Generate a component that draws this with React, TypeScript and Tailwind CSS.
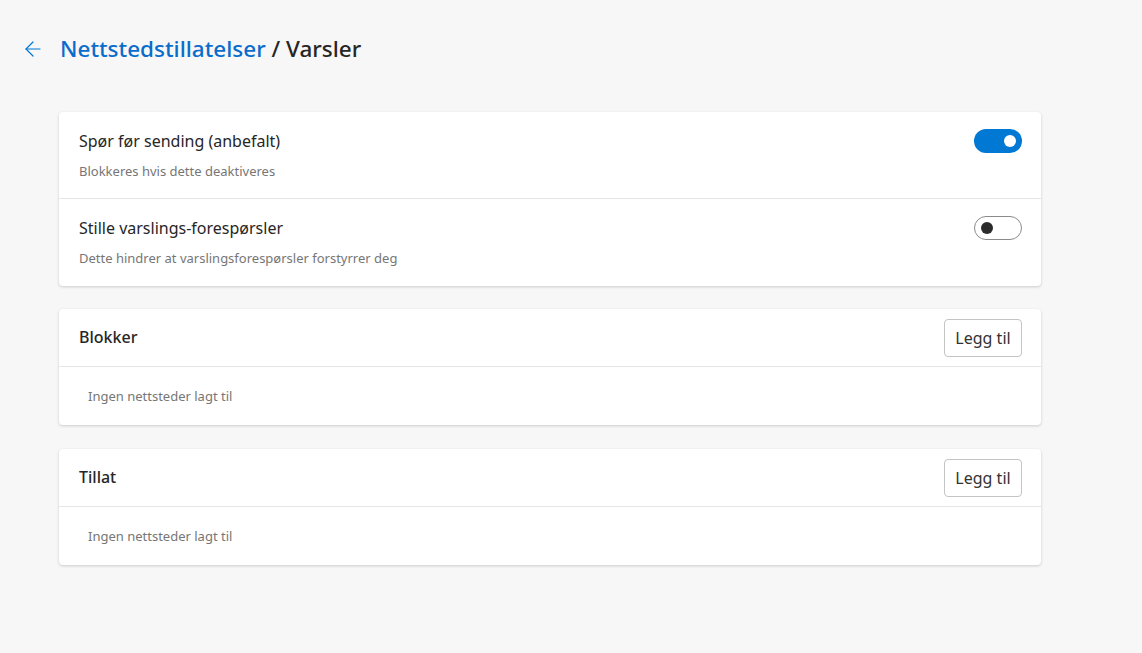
import { ArrowLeft } from "lucide-react";

function Toggle({ on }: { on: boolean }) {
  return on ? (
    <div className="flex h-6 w-12 items-center justify-end rounded-full bg-[#0078d4] pr-[6px]">
      <div className="h-3 w-3 rounded-full bg-white" />
    </div>
  ) : (
    <div className="flex h-6 w-12 items-center rounded-full border border-[#8a8a8a] bg-white pl-[6px]">
      <div className="h-3 w-3 rounded-full bg-[#2b2b2b]" />
    </div>
  );
}

function SettingRow({ title, desc, on, divider }: { title: string; desc: string; on: boolean; divider?: boolean }) {
  return (
    <div
      className={`flex items-start justify-between pl-5 pr-[19px] ${divider ? "h-[88px] border-t border-[#e5e5e5] pt-[17px]" : "h-[86px] pt-[17px]"}`}
    >
      <div className="flex flex-col">
        <p className="text-[16px] leading-6 text-[#262626]">{title}</p>
        <p className="mt-[10px] text-[13px] leading-4 text-[#767676]">{desc}</p>
      </div>
      <Toggle on={on} />
    </div>
  );
}

function SiteList({ title, className = "" }: { title: string; className?: string }) {
  return (
    <div className={`rounded bg-white shadow-[0_1px_3px_rgba(0,0,0,0.18)] ${className}`}>
      <div className="flex h-[58px] items-center justify-between border-b border-[#e5e5e5] pl-5 pr-[19px]">
        <p className="text-[16px] font-medium text-[#262626]">{title}</p>
        <button className="mt-[1px] h-[38px] w-[78px] rounded-sm border border-[#c4c4c4] bg-white text-[16px] text-[#333]">
          Legg til
        </button>
      </div>
      <div className="flex h-[58px] items-center px-[29px] pt-[2px]">
        <p className="text-[13px] text-[#767676]">Ingen nettsteder lagt til</p>
      </div>
    </div>
  );
}

export default function App() {
  return (
    <div className="min-h-[653px] bg-[#f7f7f7] font-['Noto_Sans',sans-serif]">
      <div className="flex items-center gap-[15px] pl-[21px] pt-[32px]">
        <ArrowLeft className="h-6 w-6 text-[#0078d4]" strokeWidth={1.2} />
        <h1 className="text-[22.5px] font-medium text-[#262626]">
          <span className="text-[#0a6ccb]">Nettstedstillatelser</span> / Varsler
        </h1>
      </div>
      <div className="ml-[59px] mt-[46px] flex w-[982px] flex-col gap-[23px]">
        <div className="rounded bg-white shadow-[0_1px_3px_rgba(0,0,0,0.18)]">
          <SettingRow title="Spør før sending (anbefalt)" desc="Blokkeres hvis dette deaktiveres" on />
          <SettingRow title="Stille varslings-forespørsler" desc="Dette hindrer at varslingsforespørsler forstyrrer deg" on={false} divider />
        </div>
        <SiteList title="Blokker" />
        <SiteList title="Tillat" className="mt-[1px]" />
      </div>
    </div>
  );
}
